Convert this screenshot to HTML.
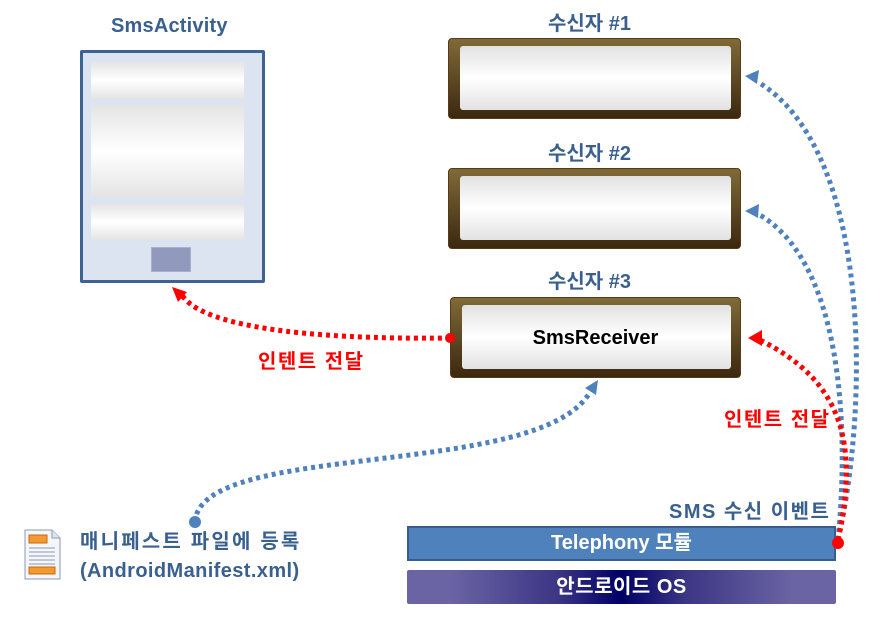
<!DOCTYPE html>
<html><head><meta charset="utf-8"><style>
body{margin:0;width:885px;height:625px;background:#fff;position:relative;overflow:hidden;font-family:"Liberation Sans","Noto Sans CJK KR",sans-serif;}
.t{position:absolute;font-weight:bold;white-space:nowrap}
.box{position:absolute;border-radius:4px;background:linear-gradient(#7f6a38,#3b2810);border:1px solid #5a3a10;box-sizing:border-box}
.in{position:absolute;left:11px;right:9px;top:7px;bottom:8px;border-radius:3px;background:linear-gradient(#e2e2e2,#fff 50%,#e2e2e2)}
.pan{position:absolute;left:8px;right:18px;background:linear-gradient(#e4e4e4,#fff 50%,#e4e4e4)}
</style></head><body>
<div class="t" style="left:111px;top:15px;font-size:20px;color:#3a6090;letter-spacing:0.2px">SmsActivity</div>
<div style="position:absolute;left:80px;top:50px;width:185px;height:233px;box-sizing:border-box;border:3px solid #3e6292;background:#dbe4f0;border-radius:2px">
<div class="pan" style="top:9px;height:37px"></div>
<div class="pan" style="top:52px;height:92px"></div>
<div class="pan" style="top:151px;height:36px"></div>
<div style="position:absolute;left:68px;top:194px;width:38px;height:23px;background:#919abd;border:1px solid #a7b0d0"></div>
</div>
<div class="t" style="left:548px;top:7px;font-size:20px;color:#3a6090">수신자 #1</div>
<div class="box" style="left:448px;top:38px;width:293px;height:81px"><div class="in"></div></div>
<div class="t" style="left:548px;top:137px;font-size:20px;color:#3a6090">수신자 #2</div>
<div class="box" style="left:448px;top:168px;width:293px;height:81px"><div class="in"></div></div>
<div class="t" style="left:548px;top:265px;font-size:20px;color:#3a6090">수신자 #3</div>
<div class="box" style="left:450px;top:297px;width:291px;height:81px"><div class="in"></div>
<div class="t" style="left:0;right:0;top:29px;text-align:center;font-size:20px;color:#000">SmsReceiver</div></div>
<div class="t" style="left:258px;top:345px;font-size:20px;color:#f00;letter-spacing:1.5px">인텐트 전달</div>
<div class="t" style="left:724px;top:403px;font-size:20px;color:#f00;letter-spacing:1.5px">인텐트 전달</div>
<div class="t" style="left:669px;top:495px;font-size:20px;color:#3a6090;letter-spacing:1.5px">SMS 수신 이벤트</div>
<div style="position:absolute;left:407px;top:526px;width:429px;height:35px;box-sizing:border-box;background:#4f81bd;border:2px solid #385d8a;color:#fff;font-weight:bold;font-size:20px;text-align:center;line-height:31px">Telephony 모듈</div>
<div style="position:absolute;left:407px;top:570px;width:429px;height:34px;border-radius:2px;background:linear-gradient(90deg,#6a64a4 0%,#6a64a4 10%,#3c3684 35%,#000066 50%,#3c3684 65%,#6a64a4 90%);color:#fff;font-weight:bold;font-size:20px;text-align:center;line-height:34px;letter-spacing:0.5px">안드로이드 OS</div>
<div class="t" style="left:80px;top:528px;font-size:20px;color:#3a6090;line-height:29px"><span style="letter-spacing:2.2px">매니페스트 파일에 등록</span><br><span style="letter-spacing:0.4px">(AndroidManifest.xml)</span></div>
<svg style="position:absolute;left:0;top:0" width="885" height="625">
<g fill="none" stroke-width="5" stroke-dasharray="4 4">
<path d="M838 540 C870 400 870 150 758 82" stroke="#4f81bd"/>
<path d="M838 540 C850 420 840 260 758 214" stroke="#4f81bd"/>
<path d="M838 540 C860 440 840 380 760 340" stroke="#f00"/>
<path d="M450 338 C300 340 200 325 182 295" stroke="#f00"/>
<path d="M195 522 C200 440 540 480 590 392" stroke="#4f81bd"/>
</g>
<polygon points="745,76 759,70 757,84" fill="#4f81bd"/>
<polygon points="745,211 759,204 758,218" fill="#4f81bd"/>
<polygon points="748,338 762,330 762,346" fill="#f00"/>
<polygon points="172,287 187,292 178,302" fill="#f00"/>
<polygon points="598,380 596,395 585,388" fill="#4f81bd"/>
<circle cx="450" cy="338" r="5" fill="#f00"/>
<circle cx="838" cy="543" r="6" fill="#f00"/>
<circle cx="195" cy="522" r="6" fill="#4f81bd"/>
<g transform="translate(24,529)">
<path d="M1 1 H28 L36 9 V50 H1 Z" fill="#f4f6fa" stroke="#8a9ab8"/>
<path d="M28 1 V9 H36" fill="#dfe4ee" stroke="#8a9ab8"/>
<rect x="5" y="6" width="18" height="8" fill="#f29a30" stroke="#c86a10"/>
<rect x="5" y="38" width="26" height="7" fill="#f29a30" stroke="#c86a10"/>
<g stroke="#8a9ab8"><line x1="5" y1="19" x2="31" y2="19"/><line x1="5" y1="23" x2="31" y2="23"/><line x1="5" y1="27" x2="31" y2="27"/><line x1="5" y1="31" x2="31" y2="31"/><line x1="5" y1="35" x2="31" y2="35"/></g>
</g>
</svg>
</body></html>
